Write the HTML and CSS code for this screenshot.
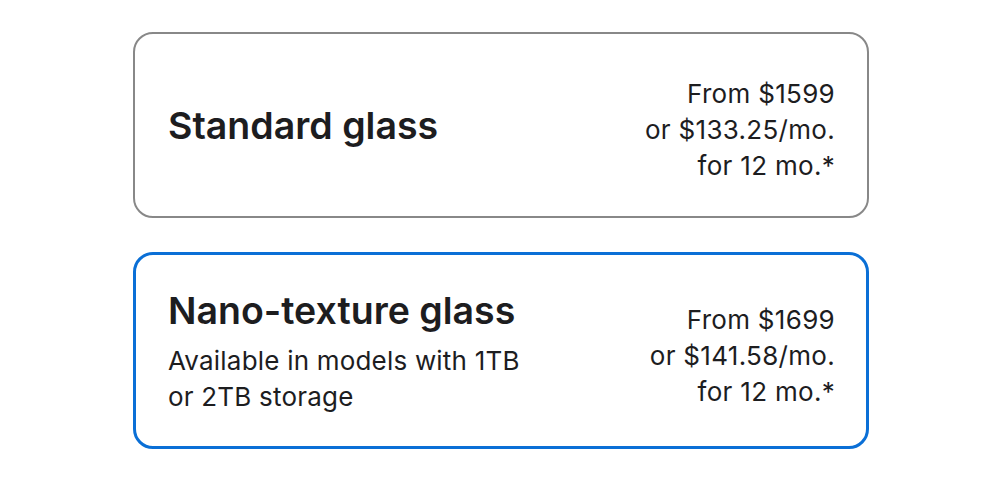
FILE: index.html
```html
<!DOCTYPE html>
<html lang="en">

<head>
  <meta charset="UTF-8" />
  <meta name="viewport" content="width=device-width, initial-scale=1.0" />
  <title>Display glass</title>
  <link rel="stylesheet" href="styles.css">
</head>

<body>
  <!-- Glass options -->
  <div class="options">
    <div class="option">
      <div class="option-info">
        <h3 class="option-title">Standard glass</h3>
      </div>
      <div class="option-price">
        From $1599<br>
        or $133.25/mo.<br>
        for 12 mo.*
      </div>
    </div>

    <div class="option selected">
      <div class="option-info">
        <h3 class="option-title">Nano-texture glass</h3>
        <p class="option-note">Available in models with 1TB<br>or 2TB storage</p>
      </div>
      <div class="option-price">
        From $1699<br>
        or $141.58/mo.<br>
        for 12 mo.*
      </div>
    </div>
  </div>
</body>

</html>
```

FILE: styles.css
```css
body {
  margin: 0;
  font-family: Inter, "Noto Sans", sans-serif;
  background: #fff;
  color: #1d1d1f;
}

.options {
  width: 736px;
  margin-left: 133px;
  padding-top: 32px;
  display: flex;
  flex-direction: column;
  gap: 34px;
}

.option {
  box-sizing: border-box;
  border: 2px solid #888;
  border-radius: 20px;
  min-height: 186px;
  padding: 20px 32px 20px 33px;
  display: flex;
  justify-content: space-between;
  align-items: center;
}

.option.selected {
  border: 3px solid #0a6fd6;
  min-height: 197px;
  padding: 20px 31px 20px 32px;
}

.option-info {
  padding-top: 2px;
}

.option-title {
  margin: 0;
  font-size: 37.5px;
  font-weight: 600;
  line-height: 44px;
}

.option-note {
  margin: 10px 0 0;
  font-size: 26px;
  line-height: 36px;
  letter-spacing: 0.2px;
}

.option-price {
  padding-top: 10px;
  text-align: right;
  font-size: 26px;
  line-height: 36px;
  letter-spacing: 0.3px;
}
```
